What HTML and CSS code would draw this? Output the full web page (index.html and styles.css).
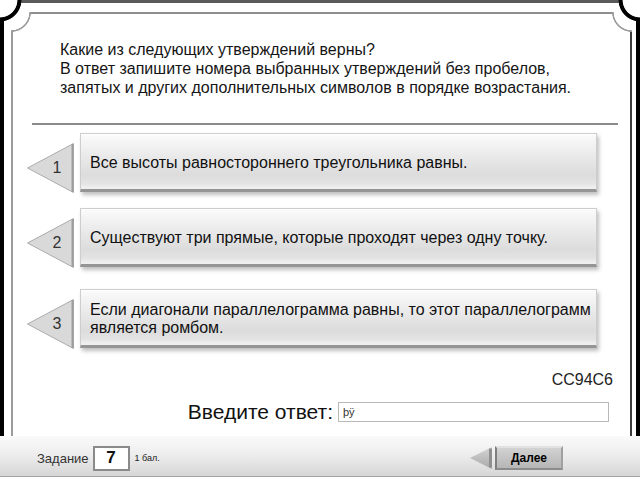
FILE: index.html
```html
<!DOCTYPE html>
<html lang="ru">
<head>
<meta charset="utf-8">
<title>Задание 7</title>
<link rel="stylesheet" href="styles.css">
</head>
<body>
<div class="frame">
  <div class="panel">
    <p class="question">Какие из следующих утверждений верны?<br>В ответ запишите номера выбранных утверждений без пробелов,<br>запятых и других дополнительных символов в порядке возрастания.</p>
    <div class="sep"></div>
    <div class="options">
      <div class="opt">
        <svg class="num" width="48" height="50" viewBox="0 0 48 50">
          <polygon class="tri" points="46.5,0.5 46.5,49.5 0.5,25"/>
          <line class="tri-edge" x1="45.5" y1="1" x2="45.5" y2="49"/>
          <text x="30" y="30">1</text>
        </svg>
        <div class="card">Все высоты равностороннего треугольника равны.</div>
      </div>
      <div class="opt">
        <svg class="num" width="48" height="50" viewBox="0 0 48 50">
          <polygon class="tri" points="46.5,0.5 46.5,49.5 0.5,25"/>
          <line class="tri-edge" x1="45.5" y1="1" x2="45.5" y2="49"/>
          <text x="30" y="30">2</text>
        </svg>
        <div class="card">Существуют три прямые, которые проходят через одну точку.</div>
      </div>
      <div class="opt">
        <svg class="num" width="48" height="50" viewBox="0 0 48 50">
          <polygon class="tri" points="46.5,0.5 46.5,49.5 0.5,25"/>
          <line class="tri-edge" x1="45.5" y1="1" x2="45.5" y2="49"/>
          <text x="30" y="30">3</text>
        </svg>
        <div class="card">Если диагонали параллелограмма равны, то этот параллелограмм является ромбом.</div>
      </div>
    </div>
    <div class="code">CC94C6</div>
    <div class="answer">
      <span class="answer-label">Введите ответ:</span>
      <div class="answer-input">þÿ</div>
    </div>
  </div>
</div>
<div class="footer">
  <span class="task-label">Задание</span>
  <span class="task-num">7</span>
  <span class="points">1 бал.</span>
  <span class="spacer"></span>
  <svg class="back" width="23" height="22" viewBox="0 0 23 22">
    <defs>
      <linearGradient id="backg" x1="0" y1="0" x2="0" y2="1">
        <stop offset="0" stop-color="#d4d4d4"/>
        <stop offset="1" stop-color="#a9a9a9"/>
      </linearGradient>
    </defs>
    <polygon points="22,0 22,22 0,11" fill="url(#backg)"/>
    <rect x="19" y="1.5" width="3" height="19" fill="#8f8f8f"/>
  </svg>
  <span class="next">Далее</span>
</div>
</body>
</html>
```

FILE: styles.css
```css
* {
  box-sizing: border-box;
}

html,
body {
  margin: 0;
  padding: 0;
}

body {
  width: 640px;
  height: 480px;
  overflow: hidden;
  background: #fff;
  font-family: "Liberation Sans", Arial, sans-serif;
  color: #111;
}

/* outer frame with concave top corners */
.frame {
  position: relative;
  height: 436px;
  background: #fff;
  border-top: 3px solid #5a5a5a;
  border-left: 4px solid #000;
  border-right: 4px solid #000;
  display: flow-root;
}

.frame::before,
.frame::after {
  content: "";
  position: absolute;
  top: -3px;
  width: 24px;
  height: 24px;
}

.frame::before {
  left: -4px;
  background: radial-gradient(circle at 0 0, #fff 17px, #000 17.8px, #000 21px, transparent 21.8px);
}

.frame::after {
  right: -4px;
  background: radial-gradient(circle at 100% 0, #fff 17px, #000 17.8px, #000 21px, transparent 21.8px);
}

/* inner panel: lines drawn as background layers */
.panel {
  height: 424px;
  margin: 9px 4px 0 7px;
  padding: 28px 19px 0 49px;
  background:
    radial-gradient(circle at 0 0, transparent 18px, #9c9c9c 18.6px, #9c9c9c 19.6px, transparent 20.2px) 0 0 / 21px 21px no-repeat,
    radial-gradient(circle at 100% 0, transparent 18px, #9c9c9c 18.6px, #9c9c9c 19.6px, transparent 20.2px) 100% 0 / 21px 21px no-repeat,
    linear-gradient(#8e8e8e, #8e8e8e) 19px 0 / calc(100% - 38px) 2px no-repeat,
    linear-gradient(#9c9c9c, #9c9c9c) 0 19px / 2px 100% no-repeat,
    linear-gradient(#3c3c3c, #3c3c3c) 100% 19px / 2px 100% no-repeat;
}

.question {
  margin: 0;
  font-size: 16px;
  line-height: 19px;
  color: #151515;
}

.sep {
  height: 2px;
  margin: 26px -5px 0 -28px;
  background: #8a8a8a;
}

.options {
  margin: 8px 0 0 -33px;
  display: flex;
  flex-direction: column;
}

.opt {
  display: flex;
  align-items: flex-end;
  gap: 5px;
}

.opt + .opt {
  margin-top: 16px;
}

.opt:nth-child(3) {
  margin-top: 22px;
}

.num {
  flex: none;
  margin-bottom: -1px;
}

.num .tri {
  fill: #d9d9d9;
  stroke: #ababab;
  stroke-width: 1;
}

.num .tri-edge {
  stroke: #9d9d9d;
  stroke-width: 2;
}

.num text {
  font-family: "Liberation Sans", Arial, sans-serif;
  font-size: 16px;
  fill: #333;
  text-anchor: middle;
}

.card {
  width: 517px;
  height: 59px;
  padding: 3px 0 0 9px;
  display: flex;
  align-items: center;
  font-size: 16px;
  line-height: 18px;
  color: #111;
  background: linear-gradient(#fbfbfb 0%, #ececec 35%, #dcdcdc 74%, #e4e4e4 90%, #efefef 97%);
  border: 1px solid #cdcdcd;
  border-bottom: 3px solid #959595;
  box-shadow: 2px 3px 4px rgba(0, 0, 0, 0.25), inset 0 1px 0 #fff;
}

.code {
  margin-top: 23px;
  text-align: right;
  font-size: 16px;
  line-height: 18px;
  color: #222;
}

.answer {
  margin: 11px 4px 0 0;
  display: flex;
  justify-content: flex-end;
  align-items: center;
  gap: 5px;
}

.answer-label {
  font-size: 21px;
  line-height: 24px;
  color: #111;
}

.answer-input {
  width: 271px;
  height: 20px;
  padding: 2px 4px;
  border: 1px solid #b8b8b8;
  background: #fff;
  font-size: 11px;
  line-height: 14px;
  color: #333;
}

/* bottom bar */
.footer {
  height: 41px;
  padding: 4px 77px 0 37px;
  display: flex;
  align-items: center;
  background: linear-gradient(#fafafa, #eeeeee 45%, #d6d6d6);
  border-bottom: 1px solid #a4a4a4;
}

.task-label {
  font-size: 13px;
  color: #333;
}

.task-num {
  width: 37px;
  height: 25px;
  margin-left: 4px;
  display: flex;
  align-items: center;
  justify-content: center;
  border: 2px solid #8a8a8a;
  background: #fff;
  font-size: 17px;
  font-weight: bold;
  color: #111;
}

.points {
  margin-left: 5px;
  font-size: 9px;
  color: #222;
}

.spacer {
  flex: 1;
}

.back {
  flex: none;
}

.next {
  width: 68px;
  height: 24px;
  margin-left: 2px;
  display: flex;
  align-items: center;
  justify-content: center;
  font-size: 12px;
  font-weight: bold;
  color: #000;
  background: linear-gradient(#d2d2d2, #b6b6b6);
  border-top: 2px solid #e2e2e2;
  border-left: 2px solid #7e7e7e;
  border-right: 2px solid #a0a0a0;
  border-bottom: 2px solid #8c8c8c;
}
```
